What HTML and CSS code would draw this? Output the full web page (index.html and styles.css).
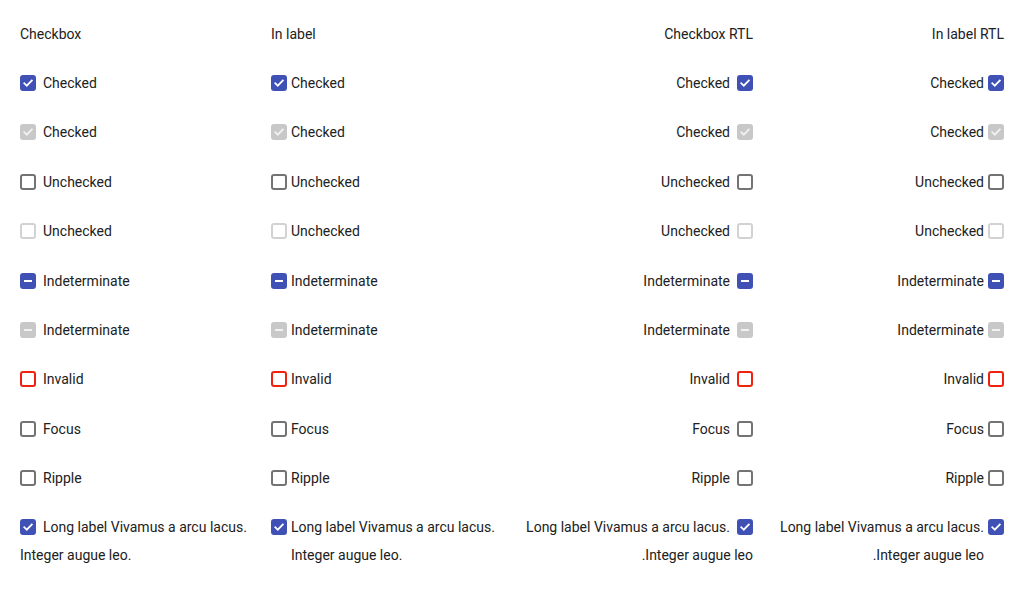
FILE: index.html
```html
<!DOCTYPE html>
<html lang="en">
<head>
<meta charset="utf-8">
<title>Checkbox demo</title>
<link rel="stylesheet" href="styles.css">
</head>
<body>
<svg width="0" height="0" class="defs" aria-hidden="true">
  <symbol id="chk" viewBox="0 0 16 16"><path d="M4.3 8.3 L6.8 10.7 L11.8 5.6" fill="none" stroke="currentColor" stroke-width="1.8" stroke-linecap="square"/></symbol>
  <symbol id="ind" viewBox="0 0 16 16"><rect x="4" y="7" width="8" height="2" fill="currentColor"/></symbol>
</svg>
<main class="grid">
  <section class="col sib">
    <div class="row head">Checkbox</div>
    <div class="row"><span class="cb on"><svg><use href="#chk"/></svg></span><span>Checked</span></div>
    <div class="row"><span class="cb on dis"><svg><use href="#chk"/></svg></span><span>Checked</span></div>
    <div class="row"><span class="cb off"></span><span>Unchecked</span></div>
    <div class="row"><span class="cb off dis"></span><span>Unchecked</span></div>
    <div class="row"><span class="cb on"><svg><use href="#ind"/></svg></span><span>Indeterminate</span></div>
    <div class="row"><span class="cb on dis"><svg><use href="#ind"/></svg></span><span>Indeterminate</span></div>
    <div class="row"><span class="cb off bad"></span><span>Invalid</span></div>
    <div class="row"><span class="cb off"></span><span>Focus</span></div>
    <div class="row"><span class="cb off"></span><span>Ripple</span></div>
    <div class="long inl"><span class="cb on"><svg><use href="#chk"/></svg></span> Long label Vivamus a arcu lacus. Integer augue leo.</div>
  </section>
  <section class="col inlab">
    <div class="row head">In label</div>
    <div class="row"><span class="cb on"><svg><use href="#chk"/></svg></span><span>Checked</span></div>
    <div class="row"><span class="cb on dis"><svg><use href="#chk"/></svg></span><span>Checked</span></div>
    <div class="row"><span class="cb off"></span><span>Unchecked</span></div>
    <div class="row"><span class="cb off dis"></span><span>Unchecked</span></div>
    <div class="row"><span class="cb on"><svg><use href="#ind"/></svg></span><span>Indeterminate</span></div>
    <div class="row"><span class="cb on dis"><svg><use href="#ind"/></svg></span><span>Indeterminate</span></div>
    <div class="row"><span class="cb off bad"></span><span>Invalid</span></div>
    <div class="row"><span class="cb off"></span><span>Focus</span></div>
    <div class="row"><span class="cb off"></span><span>Ripple</span></div>
    <div class="long flx"><span class="cb on"><svg><use href="#chk"/></svg></span><span class="txt">Long label Vivamus a arcu lacus. Integer augue leo.</span></div>
  </section>
  <section class="col sib rtl">
    <div class="row head">Checkbox RTL</div>
    <div class="row"><span class="cb on"><svg><use href="#chk"/></svg></span><span>Checked</span></div>
    <div class="row"><span class="cb on dis"><svg><use href="#chk"/></svg></span><span>Checked</span></div>
    <div class="row"><span class="cb off"></span><span>Unchecked</span></div>
    <div class="row"><span class="cb off dis"></span><span>Unchecked</span></div>
    <div class="row"><span class="cb on"><svg><use href="#ind"/></svg></span><span>Indeterminate</span></div>
    <div class="row"><span class="cb on dis"><svg><use href="#ind"/></svg></span><span>Indeterminate</span></div>
    <div class="row"><span class="cb off bad"></span><span>Invalid</span></div>
    <div class="row"><span class="cb off"></span><span>Focus</span></div>
    <div class="row"><span class="cb off"></span><span>Ripple</span></div>
    <div class="long inl"><span class="cb on"><svg><use href="#chk"/></svg></span> Long label Vivamus a arcu lacus. Integer augue leo.</div>
  </section>
  <section class="col inlab rtl">
    <div class="row head">In label RTL</div>
    <div class="row"><span class="cb on"><svg><use href="#chk"/></svg></span><span>Checked</span></div>
    <div class="row"><span class="cb on dis"><svg><use href="#chk"/></svg></span><span>Checked</span></div>
    <div class="row"><span class="cb off"></span><span>Unchecked</span></div>
    <div class="row"><span class="cb off dis"></span><span>Unchecked</span></div>
    <div class="row"><span class="cb on"><svg><use href="#ind"/></svg></span><span>Indeterminate</span></div>
    <div class="row"><span class="cb on dis"><svg><use href="#ind"/></svg></span><span>Indeterminate</span></div>
    <div class="row"><span class="cb off bad"></span><span>Invalid</span></div>
    <div class="row"><span class="cb off"></span><span>Focus</span></div>
    <div class="row"><span class="cb off"></span><span>Ripple</span></div>
    <div class="long flx"><span class="cb on"><svg><use href="#chk"/></svg></span><span class="txt">Long label Vivamus a arcu lacus. Integer augue leo.</span></div>
  </section>
</main>
</body>
</html>
```

FILE: styles.css
```css
html, body {
  margin: 0;
  padding: 0;
  background: #ffffff;
}
body {
  font-family: Roboto, "Liberation Sans", Arial, sans-serif;
  font-size: 14px;
  color: #212121;
}
.defs {
  position: absolute;
  width: 0;
  height: 0;
  overflow: hidden;
}
.grid {
  display: grid;
  grid-template-columns: repeat(4, 231px);
  column-gap: 20px;
  padding: 9px 20px 0 20px;
}
.col {
  display: flex;
  flex-direction: column;
}
.rtl {
  direction: rtl;
}
.row {
  height: 49.4px;
  display: flex;
  align-items: center;
  line-height: 20px;
  white-space: nowrap;
}
.cb {
  flex: none;
  box-sizing: border-box;
  display: inline-block;
  width: 16px;
  height: 16px;
  border-radius: 3px;
  color: #ffffff;
}
.cb svg {
  display: block;
  width: 16px;
  height: 16px;
}
.cb.on {
  background: #3f51b5;
}
.cb.on.dis {
  background: #c8c8c8;
  color: #f2f2f2;
}
.cb.off {
  border: 2px solid #737373;
}
.cb.off.dis {
  border-color: #d2d2d2;
}
.cb.off.bad {
  border-color: #f0220f;
}
.sib .row .cb {
  margin-inline-end: 7px;
}
.inlab .row .cb {
  margin-inline-end: 4px;
}
.long {
  padding-top: 10px;
  line-height: 28px;
}
.long.inl .cb {
  vertical-align: -3px;
  margin-inline-end: 3.5px;
}
.long.flx {
  display: flex;
  align-items: flex-start;
}
.long.flx .cb {
  margin-top: 6px;
  margin-inline-end: 4px;
}
.long.flx .txt {
  flex: 1;
}
```
